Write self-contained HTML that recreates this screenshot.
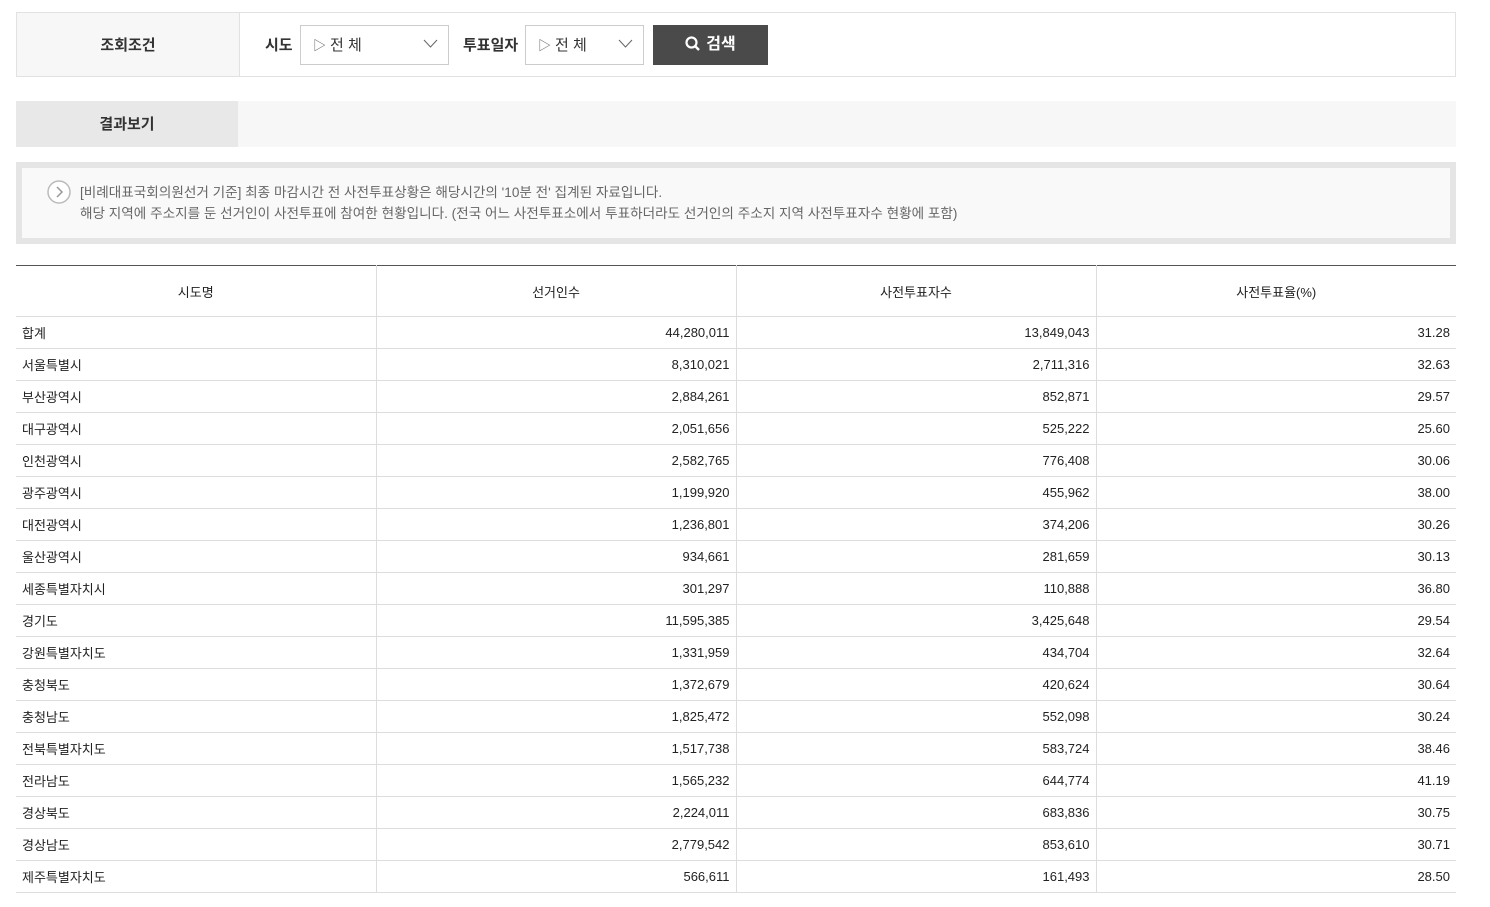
<!DOCTYPE html>
<html><head><meta charset="utf-8"><style>
*{margin:0;padding:0;box-sizing:border-box}
body{width:1490px;height:907px;background:#fff;font-family:"Liberation Sans","Noto Sans CJK KR",sans-serif;color:#333;position:relative;overflow:hidden}
.abs{position:absolute}
.search{left:16px;top:12px;width:1440px;height:65px;border:1px solid #e2e2e2}
.lab{left:0;top:0;width:223px;height:63px;background:#f7f7f7;border-right:1px solid #e2e2e2;font-size:15px;font-weight:bold;text-align:center;line-height:65px;color:#333}
.sel{border:1px solid #ccc;height:40px;top:12px;font-size:15px;line-height:40px;padding-left:12px;color:#333}
.sel span{font-size:13px;color:#666;margin-right:4px}
.t{font-size:15px;font-weight:bold;top:12px;line-height:42px}
.btn{left:636px;top:12px;width:115px;height:40px;background:#4a4a4a;color:#fff;font-size:16px;font-weight:bold;line-height:40px;text-align:center}
table{position:absolute;left:16px;top:265px;width:1440px;border-collapse:collapse;border-top:1px solid #555;font-size:13px;color:#222}
th{height:51px;font-weight:normal;border-bottom:1px solid #ddd;border-right:1px solid #ddd;width:360px}
td{height:32px;border-bottom:1px solid #ddd;border-right:1px solid #ddd;text-align:right;padding:0 6px}
td:first-child{text-align:left}
th:last-child,td:last-child{border-right:none}
</style></head><body>
<div class="abs search">
<div class="abs lab">조회조건</div>
<div class="abs t" style="left:248px">시도</div>
<div class="abs sel" style="left:283px;width:149px"><span>▷</span>전 체<svg class="abs" style="right:10px;top:13px" width="15" height="9"><path d="M1 1L7.5 8L14 1" fill="none" stroke="#666"/></svg></div>
<div class="abs t" style="left:446px">투표일자</div>
<div class="abs sel" style="left:508px;width:119px"><span>▷</span>전 체<svg class="abs" style="right:10px;top:13px" width="15" height="9"><path d="M1 1L7.5 8L14 1" fill="none" stroke="#666"/></svg></div>
<div class="abs btn"><svg width="15" height="15" style="vertical-align:-2px;margin-right:6px"><circle cx="6.5" cy="6.5" r="5" fill="none" stroke="#fff" stroke-width="2.2"/><path d="M10 10L14 14" stroke="#fff" stroke-width="2.4"/></svg>검색</div>
</div>
<div class="abs" style="left:16px;top:101px;width:1440px;height:46px;background:#f7f7f7"></div>
<div class="abs" style="left:16px;top:101px;width:222px;height:46px;background:#e8e8e8;font-size:15px;font-weight:bold;text-align:center;line-height:48px">결과보기</div>
<div class="abs" style="left:16px;top:162px;width:1440px;height:82px;background:#e5e5e5"></div>
<div class="abs" style="left:22px;top:168px;width:1428px;height:70px;background:#f9f9f9;font-size:13.6px;color:#666;line-height:21px;padding:14px 0 0 58px">
<svg class="abs" style="left:25px;top:12px" width="24" height="24"><circle cx="12" cy="12" r="11" fill="#fff" stroke="#bbb" stroke-width="1.5"/><path d="M10 7L15 12L10 17" fill="none" stroke="#999" stroke-width="1.5"/></svg>
[비례대표국회의원선거 기준] 최종 마감시간 전 사전투표상황은 해당시간의 '10분 전' 집계된 자료입니다.<br>해당 지역에 주소지를 둔 선거인이 사전투표에 참여한 현황입니다. (전국 어느 사전투표소에서 투표하더라도 선거인의 주소지 지역 사전투표자수 현황에 포함)</div>
<table>
<tr><th>시도명</th><th>선거인수</th><th>사전투표자수</th><th>사전투표율(%)</th></tr>
<tr><td>합계</td><td>44,280,011</td><td>13,849,043</td><td>31.28</td></tr>
<tr><td>서울특별시</td><td>8,310,021</td><td>2,711,316</td><td>32.63</td></tr>
<tr><td>부산광역시</td><td>2,884,261</td><td>852,871</td><td>29.57</td></tr>
<tr><td>대구광역시</td><td>2,051,656</td><td>525,222</td><td>25.60</td></tr>
<tr><td>인천광역시</td><td>2,582,765</td><td>776,408</td><td>30.06</td></tr>
<tr><td>광주광역시</td><td>1,199,920</td><td>455,962</td><td>38.00</td></tr>
<tr><td>대전광역시</td><td>1,236,801</td><td>374,206</td><td>30.26</td></tr>
<tr><td>울산광역시</td><td>934,661</td><td>281,659</td><td>30.13</td></tr>
<tr><td>세종특별자치시</td><td>301,297</td><td>110,888</td><td>36.80</td></tr>
<tr><td>경기도</td><td>11,595,385</td><td>3,425,648</td><td>29.54</td></tr>
<tr><td>강원특별자치도</td><td>1,331,959</td><td>434,704</td><td>32.64</td></tr>
<tr><td>충청북도</td><td>1,372,679</td><td>420,624</td><td>30.64</td></tr>
<tr><td>충청남도</td><td>1,825,472</td><td>552,098</td><td>30.24</td></tr>
<tr><td>전북특별자치도</td><td>1,517,738</td><td>583,724</td><td>38.46</td></tr>
<tr><td>전라남도</td><td>1,565,232</td><td>644,774</td><td>41.19</td></tr>
<tr><td>경상북도</td><td>2,224,011</td><td>683,836</td><td>30.75</td></tr>
<tr><td>경상남도</td><td>2,779,542</td><td>853,610</td><td>30.71</td></tr>
<tr><td>제주특별자치도</td><td>566,611</td><td>161,493</td><td>28.50</td></tr>
</table>
</body></html>
